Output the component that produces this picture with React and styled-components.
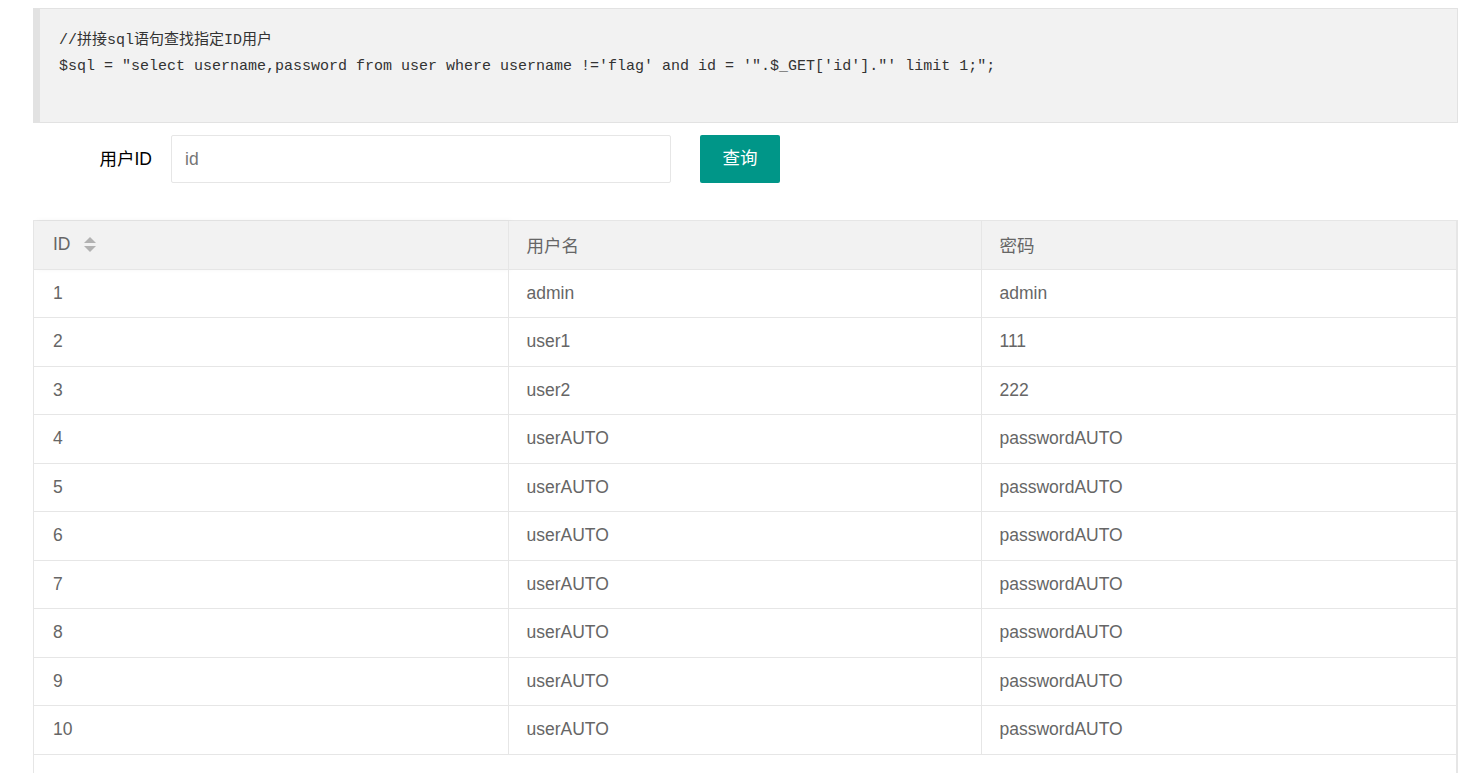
import React from "react";
import styled, { createGlobalStyle } from "styled-components";

const Global = createGlobalStyle`
  html, body { margin: 0; padding: 0; overflow: hidden; background: #fff; }
  body { font-family: "Liberation Sans", Arial, "Noto Sans CJK SC", sans-serif; color: #666; }
  * { box-sizing: border-box; }
`;

const Page = styled.div`
  width: 1425px;
  margin: 8px 0 0 33px;
  display: flex;
  flex-direction: column;
`;

const Code = styled.pre`
  margin: 0;
  height: 115px;
  padding: 19px 19px;
  background: #f2f2f2;
  border: 1px solid #e2e2e2;
  border-left: 7px solid #e2e2e2;
  color: #333;
  font-family: "Liberation Mono", "Courier New", "Noto Sans CJK SC", monospace;
  font-size: 15px;
  line-height: 26px;
  white-space: pre;
`;

const FormRow = styled.div`
  display: flex;
  align-items: center;
  margin-top: 12px;
  height: 48px;
`;

const Label = styled.label`
  width: 138px;
  padding-right: 19px;
  text-align: right;
  color: #000;
  font-size: 17.5px;
  line-height: 25px;
`;

const Input = styled.input`
  width: 500px;
  height: 48px;
  border: 1px solid #e6e6e6;
  border-radius: 2px;
  padding: 0 13px;
  font-family: "Liberation Sans", Arial, sans-serif;
  font-size: 17.5px;
  color: #333;
  outline: none;
  &::placeholder { color: #757575; }
`;

const Button = styled.button`
  margin-left: 29px;
  width: 80px;
  height: 48px;
  border: none;
  border-radius: 2px;
  background: #009688;
  color: #fff;
  font-family: "Noto Sans CJK SC", sans-serif;
  font-size: 17.5px;
  line-height: 20px;
  padding: 0 0 4px;
  cursor: pointer;
`;

const TableWrap = styled.div`
  margin-top: 37px;
  border: 1px solid #e6e6e6;
  border-right-width: 2px;
  border-bottom: none;
  padding-bottom: 40px;
`;

const Table = styled.table`
  width: 100%;
  border-collapse: collapse;
  table-layout: fixed;
`;

const Th = styled.th`
  height: 48px;
  padding: 0 18px;
  background: #f2f2f2;
  text-align: left;
  font-weight: 400;
  font-size: 17.5px;
  color: #666;
  border-bottom: 1px solid #e6e6e6;
  border-left: ${(p) => (p.$first ? "none" : "1px solid #e6e6e6")};
  ${(p) => p.$first && "padding-left: 19px; box-shadow: 3px 0 6px rgba(0,0,0,0.05);"}
  font-family: "Liberation Sans", Arial, "Noto Sans CJK SC", sans-serif;
`;

const Td = styled.td`
  height: 48.5px;
  padding: 0 18px;
  font-size: 17.5px;
  color: #666;
  border-bottom: 1px solid #e6e6e6;
  border-left: ${(p) => (p.$first ? "none" : "1px solid #e6e6e6")};
  ${(p) => p.$first && "padding-left: 19px; box-shadow: 3px 0 6px rgba(0,0,0,0.05);"}
  position: relative;
`;

const HeadInner = styled.span`
  display: inline-flex;
  align-items: center;
  gap: 13px;
`;

const SortIcon = () => (
  <svg width="12" height="15" viewBox="0 0 12 15">
    <polygon points="6,0 12,6 0,6" fill="#b2b2b2" />
    <polygon points="0,9 12,9 6,15" fill="#b2b2b2" />
  </svg>
);

const rows = [
  [1, "admin", "admin"],
  [2, "user1", "111"],
  [3, "user2", "222"],
  ...Array.from({ length: 7 }, (_, i) => [i + 4, "userAUTO", "passwordAUTO"]),
];

export default function App() {
  return (
    <>
      <Global />
      <Page>
        <Code>{`//拼接sql语句查找指定ID用户
$sql = "select username,password from user where username !='flag' and id = '".$_GET['id']."' limit 1;";`}</Code>
        <FormRow>
          <Label>用户ID</Label>
          <Input placeholder="id" />
          <Button>查询</Button>
        </FormRow>
        <TableWrap>
          <Table>
            <colgroup>
              <col style={{ width: "474px" }} />
              <col style={{ width: "473px" }} />
              <col />
            </colgroup>
            <thead>
              <tr>
                <Th $first>
                  <HeadInner>
                    ID <SortIcon />
                  </HeadInner>
                </Th>
                <Th>用户名</Th>
                <Th>密码</Th>
              </tr>
            </thead>
            <tbody>
              {rows.map((r) => (
                <tr key={r[0]}>
                  <Td $first>{r[0]}</Td>
                  <Td>{r[1]}</Td>
                  <Td>{r[2]}</Td>
                </tr>
              ))}
            </tbody>
          </Table>
        </TableWrap>
      </Page>
    </>
  );
}
